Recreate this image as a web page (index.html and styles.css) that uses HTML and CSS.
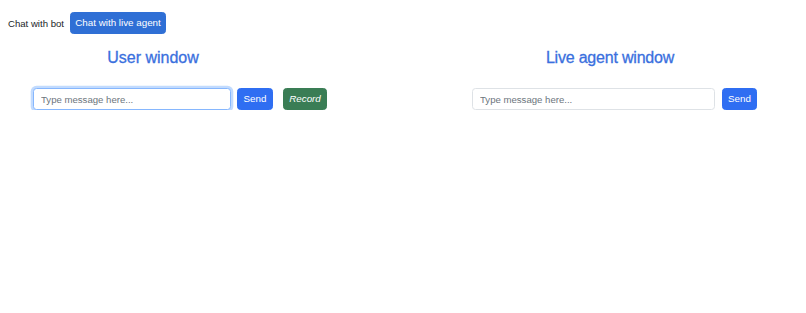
FILE: index.html
```html
<!DOCTYPE html>
<html lang="en">
<head>
<meta charset="utf-8">
<title>Chat</title>
<link rel="stylesheet" href="styles.css">
</head>
<body>
  <div class="topbar">
    <span class="mode-label">Chat with bot</span>
    <button class="btn btn-mode">Chat with live agent</button>
  </div>
  <div class="main">
    <div class="panel panel-user">
      <div class="chat">
        <h3 class="title">User window</h3>
        <div class="form-row">
          <input class="msg msg-user focused" type="text" placeholder="Type message here...">
          <button class="btn btn-send">Send</button>
        </div>
      </div>
      <button class="btn btn-record">Record</button>
    </div>
    <div class="panel panel-agent">
      <div class="chat">
        <h3 class="title">Live agent window</h3>
        <div class="form-row">
          <input class="msg msg-agent" type="text" placeholder="Type message here...">
          <button class="btn btn-send btn-send-agent">Send</button>
        </div>
      </div>
    </div>
  </div>
</body>
</html>
```
FILE: styles.css
```css
* { box-sizing: border-box; }
html, body {
  margin: 0;
  padding: 0;
  background: #ffffff;
  font-family: "Liberation Sans", Arial, sans-serif;
  color: #212529;
}
.topbar {
  display: flex;
  align-items: center;
  gap: 6px;
  padding: 12px 8px 0;
}
.mode-label {
  font-size: 9.6px;
  color: #212529;
}
.btn {
  height: 22px;
  padding: 0 7px;
  border: 1px solid transparent;
  border-radius: 3.5px;
  font-family: "Liberation Sans", Arial, sans-serif;
  font-size: 9.8px;
  line-height: 1;
  white-space: nowrap;
  color: #ffffff;
  cursor: pointer;
}
.btn-mode {
  background: #2f6fd5;
  border-color: #2f6fd5;
  width: 96px;
  padding: 0;
}
.main {
  display: flex;
  align-items: flex-end;
  padding-left: 33px;
  padding-right: 49px;
  justify-content: space-between;
}
.panel {
  display: flex;
  align-items: flex-end;
}
.chat {
  display: flex;
  flex-direction: column;
  align-items: stretch;
}
.title {
  margin: 14px 0 0;
  font-size: 16px;
  line-height: 19.2px;
  font-weight: 500;
  color: #3a70de;
  text-align: center;
  -webkit-text-stroke: 0.3px #3a70de;
}
.panel-agent .title {
  margin-right: 9px;
  letter-spacing: -0.2px;
}
.form-row {
  display: flex;
  gap: 6px;
  margin-top: 21px;
}
.msg {
  height: 22px;
  padding: 0 7px;
  border: 1px solid #dee2e6;
  border-radius: 3.5px;
  font-family: "Liberation Sans", Arial, sans-serif;
  font-size: 9.6px;
  color: #212529;
  background: #fff;
  outline: none;
}
.msg::placeholder { color: #6c757d; }
.msg-user { width: 198px; }
.msg-agent { width: 243px; }
.focused {
  border-color: #86b7fe;
  box-shadow: 0 0 0 2.3px rgba(13, 110, 253, 0.25);
}
.btn-send {
  width: 36px;
  padding: 0;
  background: #2f6ef2;
  border-color: #2f6ef2;
}
.panel-agent .form-row { gap: 7px; }
.btn-send-agent { width: 35px; }
.btn-record {
  margin-left: 10px;
  width: 44px;
  padding: 0;
  background: #3a7d55;
  border-color: #3a7d55;
  font-style: italic;
}
```
